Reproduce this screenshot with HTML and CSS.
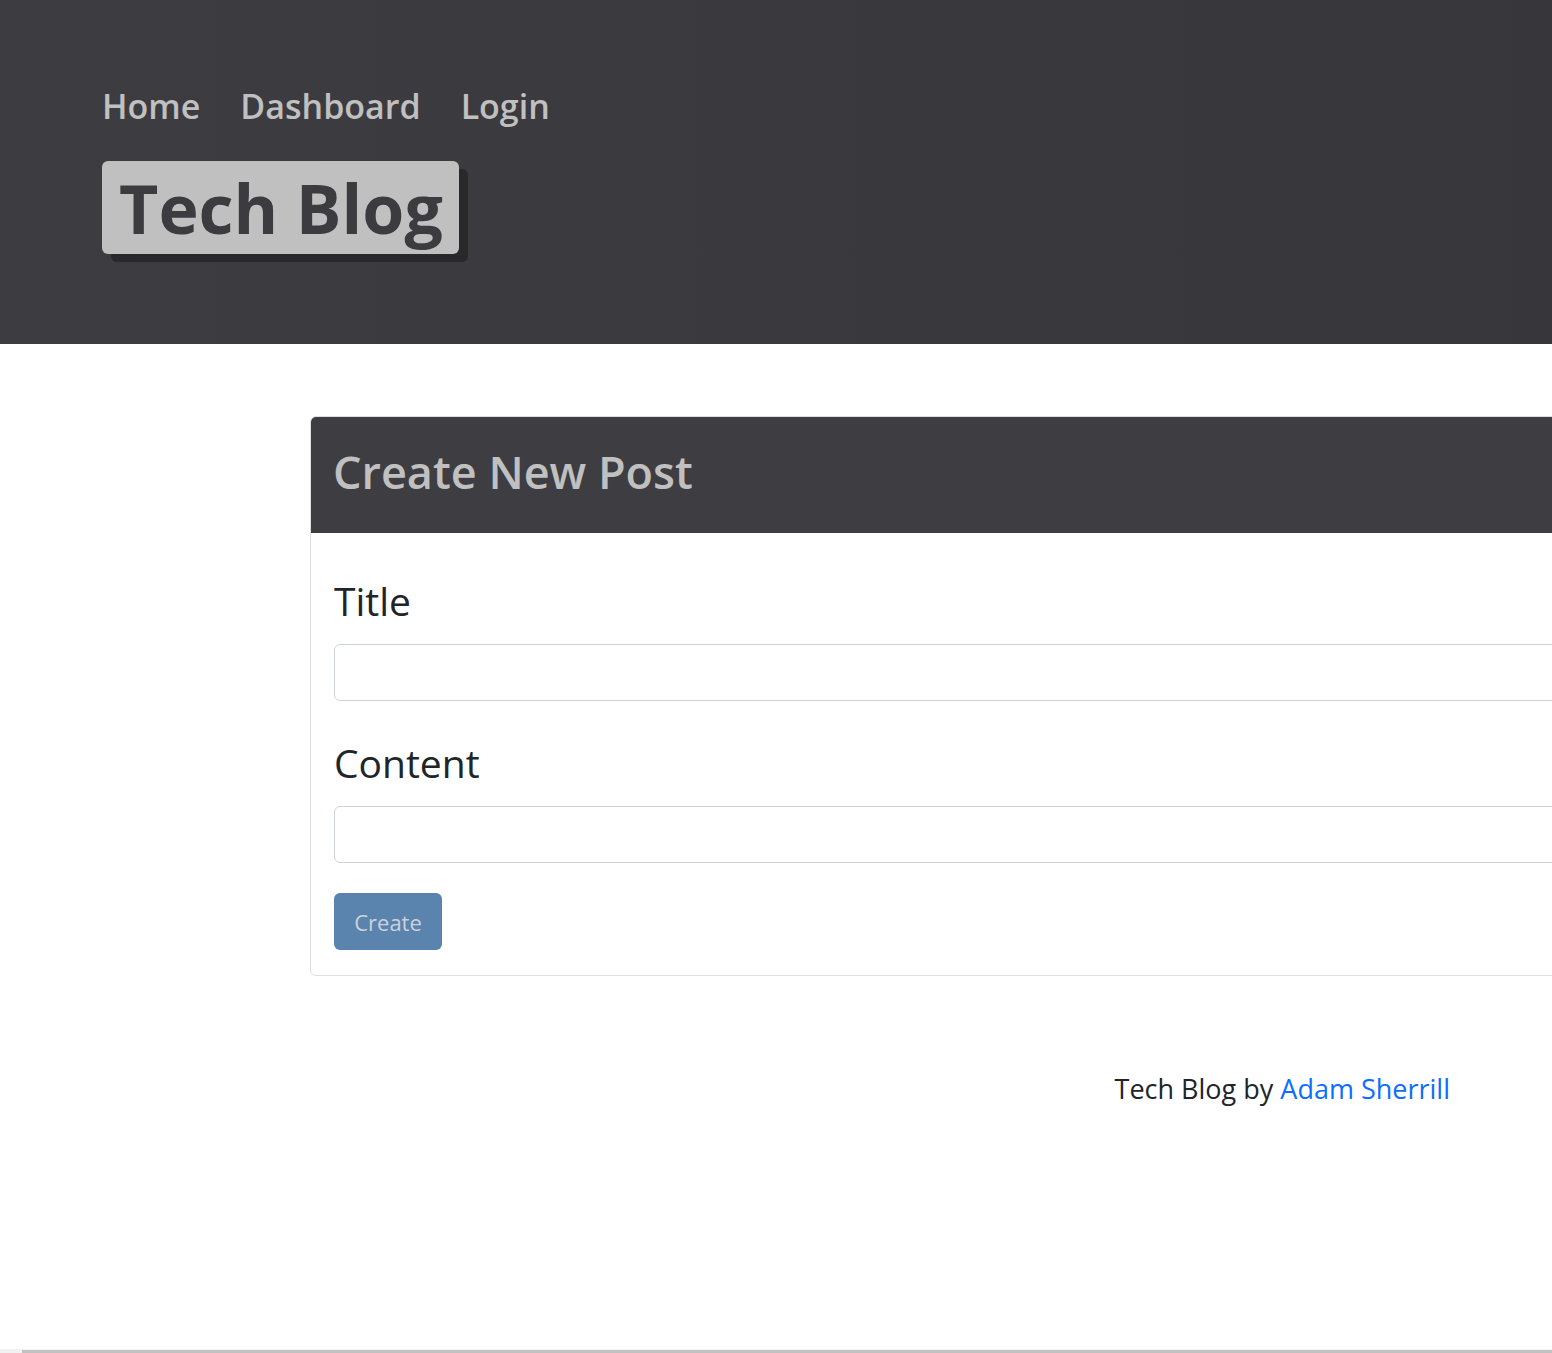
FILE: index.html
```html
<!DOCTYPE html>
<html>
<head>
<meta charset="utf-8">
<title>Tech Blog</title>
<link rel="stylesheet" href="styles.css">
</head>
<body>
<div class="page">
  <header class="site-header">
    <nav class="nav">
      <a class="nav-link" href="#">Home</a>
      <a class="nav-link" href="#">Dashboard</a>
      <a class="nav-link" href="#">Login</a>
    </nav>
    <h1 class="brand">Tech Blog</h1>
  </header>
  <main class="main">
    <section class="card">
      <div class="card-header">
        <h2 class="card-title">Create New Post</h2>
      </div>
      <form class="card-body">
        <label class="field-label" for="title">Title</label>
        <input class="field-input" id="title" type="text">
        <label class="field-label" for="content">Content</label>
        <input class="field-input" id="content" type="text">
        <button class="btn" type="button">Create</button>
      </form>
    </section>
  </main>
  <footer class="footer">
    <p class="footer-text">Tech Blog by <a class="footer-link" href="#">Adam Sherrill</a></p>
  </footer>
</div>
<div class="fake-scrollbar"><div class="fake-thumb"></div></div>
</body>
</html>
```
FILE: styles.css
```css
html, body {
  margin: 0;
  padding: 0;
  background: #ffffff;
}
body {
  font-family: "Open Sans", "Noto Sans", sans-serif;
  color: #212529;
  overflow: hidden;
  height: 1353px;
}
.page {
  width: 1552px;
  overflow: hidden;
}
.site-header {
  background: linear-gradient(to right, #3d3c41, #37363a);
  height: 344px;
  box-sizing: border-box;
  padding: 78px 0 0 102px;
}
.nav {
  display: flex;
  gap: 40px;
}
.nav-link {
  color: #c0c0c0;
  text-decoration: none;
  font-size: 34px;
  font-weight: 600;
  line-height: 56px;
}
.brand {
  display: inline-block;
  margin: 27px 0 0 0;
  background: #c0c0c0;
  color: #3c3b40;
  font-size: 68px;
  font-weight: 700;
  line-height: 93px;
  padding: 0 16px 0 17px;
  border-radius: 6px;
  box-shadow: 9px 8px 0 #29282b;
}
.main {
  padding: 72px 0 0 310px;
}
.card {
  width: 1400px;
  border: 1px solid #dfdfdf;
  border-radius: 6px;
  overflow: hidden;
}
.card-header {
  background: #3e3d42;
  height: 116px;
  box-sizing: border-box;
  display: flex;
  align-items: center;
  padding: 0 0 8px 22px;
}
.card-title {
  margin: 0;
  color: #c0c0c0;
  font-size: 45px;
  font-weight: 600;
}
.card-body {
  display: flex;
  flex-direction: column;
  align-items: flex-start;
  padding: 44px 0 25px 23px;
}
.field-label {
  font-size: 39px;
  line-height: 48px;
  margin-bottom: 19px;
  color: #212529;
}
.field-input {
  box-sizing: border-box;
  width: 100%;
  height: 57px;
  border: 1px solid #ced4da;
  border-radius: 6px;
  margin-bottom: 38px;
  font: inherit;
}
#content {
  margin-bottom: 30px;
}
.btn {
  background: #5a84ae;
  color: #cbd2da;
  border: none;
  border-radius: 6px;
  width: 108px;
  height: 57px;
  font-family: inherit;
  font-size: 22px;
  padding: 0;
}
.footer {
  display: flex;
  justify-content: flex-end;
  padding: 93px 102px 0 0;
}
.footer-text {
  margin: 0;
  font-size: 27px;
  line-height: 40px;
}
.footer-link {
  color: #0d6efd;
  text-decoration: none;
}
.fake-scrollbar {
  position: fixed;
  left: 0;
  right: 0;
  bottom: 0;
  height: 4px;
  background: #f1f1f1;
}
.fake-thumb {
  margin: 1px 0 0 22px;
  height: 3px;
  background: #c1c1c1;
}
```
